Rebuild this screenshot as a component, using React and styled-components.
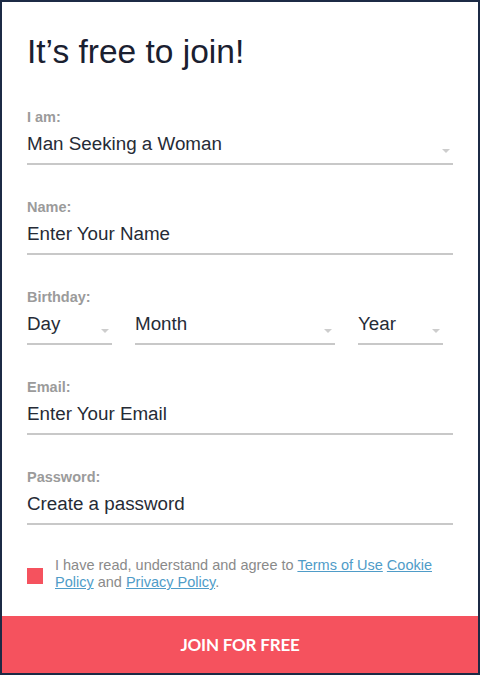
import styled, { createGlobalStyle } from "styled-components";

const GlobalStyle = createGlobalStyle`
  * { box-sizing: border-box; }
  body {
    margin: 0;
    background: #ffffff;
    font-family: "Liberation Sans", Arial, sans-serif;
  }
`;

const Frame = styled.div`
  width: 480px;
  height: 675px;
  border: 2px solid #1c2a45;
  background: #ffffff;
  display: flex;
  flex-direction: column;
`;

const Form = styled.form`
  padding: 30px 25px 0 25px;
  display: flex;
  flex-direction: column;
`;

const Title = styled.h1`
  margin: 0 0 37px 0;
  font-size: 33.5px;
  line-height: 40px;
  font-weight: 400;
  color: #1a2030;
`;

const Field = styled.div`
  display: flex;
  flex-direction: column;
  margin-bottom: 34px;
`;

const Label = styled.label`
  display: block;
  font-size: 14.5px;
  line-height: 16px;
  font-weight: 700;
  color: #9b9b9b;
  margin-bottom: 7px;
`;

const Control = styled.div`
  position: relative;
  width: ${(p) => (p.$width ? `${p.$width}px` : "100%")};
  border-bottom: 2px solid #c8c8c8;
  padding-bottom: 7px;
`;

const TextInput = styled.input`
  display: block;
  width: 100%;
  height: 24px;
  border: none;
  outline: none;
  padding: 0;
  font-family: "Liberation Sans", Arial, sans-serif;
  font-size: 18.8px;
  line-height: 24px;
  color: #262b36;
  background: transparent;
  &::placeholder {
    color: #262b36;
    opacity: 1;
  }
`;

const Select = styled.select`
  display: block;
  width: 100%;
  height: 24px;
  border: none;
  outline: none;
  padding: 0;
  appearance: none;
  -webkit-appearance: none;
  font-family: "Liberation Sans", Arial, sans-serif;
  font-size: 18.8px;
  line-height: 24px;
  color: #262b36;
  background: transparent;
`;

const Caret = styled.span`
  position: absolute;
  right: 3px;
  bottom: 10px;
  width: 0;
  height: 0;
  border-left: 4px solid transparent;
  border-right: 4px solid transparent;
  border-top: 4px solid #cdcdcd;
  pointer-events: none;
`;

const DateRow = styled.div`
  display: grid;
  grid-template-columns: 85px 200px 85px;
  column-gap: 23px;
`;

const Consent = styled.div`
  display: flex;
  align-items: center;
  gap: 12px;
  margin-top: -2px;
`;

const Box = styled.span`
  flex: 0 0 16px;
  width: 16px;
  height: 16px;
  margin-top: 3px;
  background: #f5525e;
`;

const ConsentText = styled.p`
  margin: 0;
  font-size: 14.5px;
  line-height: 17px;
  color: #8a8a8a;
`;

const Link = styled.a`
  color: #4f9cc8;
  text-decoration: underline;
`;

const JoinButton = styled.button`
  margin-top: auto;
  height: 57px;
  width: 100%;
  border: none;
  background: #f5525e;
  color: #ffffff;
  font-family: Lato, "Open Sans", sans-serif;
  font-weight: 700;
  font-size: 17px;
  letter-spacing: -0.2px;
  cursor: pointer;
`;

function SelectField({ width, options }) {
  return (
    <Control $width={width}>
      <Select defaultValue={options[0]}>
        {options.map((o) => (
          <option key={o}>{o}</option>
        ))}
      </Select>
      <Caret />
    </Control>
  );
}

export default function App() {
  return (
    <>
      <GlobalStyle />
      <Frame>
        <Form onSubmit={(e) => e.preventDefault()}>
          <Title>It’s free to join!</Title>

          <Field>
            <Label>I am:</Label>
            <SelectField
              options={["Man Seeking a Woman", "Woman Seeking a Man"]}
            />
          </Field>

          <Field>
            <Label htmlFor="name">Name:</Label>
            <Control>
              <TextInput id="name" placeholder="Enter Your Name" />
            </Control>
          </Field>

          <Field>
            <Label>Birthday:</Label>
            <DateRow>
              <SelectField options={["Day"]} />
              <SelectField options={["Month"]} />
              <SelectField options={["Year"]} />
            </DateRow>
          </Field>

          <Field>
            <Label htmlFor="email">Email:</Label>
            <Control>
              <TextInput id="email" placeholder="Enter Your Email" />
            </Control>
          </Field>

          <Field>
            <Label htmlFor="password">Password:</Label>
            <Control>
              <TextInput
                id="password"
                type="password"
                placeholder="Create a password"
              />
            </Control>
          </Field>

          <Consent>
            <Box />
            <ConsentText>
              I have read, understand and agree to{" "}
              <Link href="#">Terms of Use</Link> <Link href="#">Cookie Policy</Link>{" "}
              and <Link href="#">Privacy Policy</Link>.
            </ConsentText>
          </Consent>
        </Form>
        <JoinButton type="button">JOIN FOR FREE</JoinButton>
      </Frame>
    </>
  );
}
